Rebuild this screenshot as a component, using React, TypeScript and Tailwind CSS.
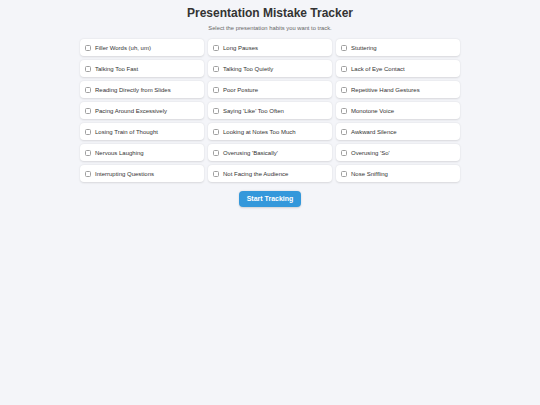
const habits = [
  "Filler Words (uh, um)",
  "Long Pauses",
  "Stuttering",
  "Talking Too Fast",
  "Talking Too Quietly",
  "Lack of Eye Contact",
  "Reading Directly from Slides",
  "Poor Posture",
  "Repetitive Hand Gestures",
  "Pacing Around Excessively",
  "Saying 'Like' Too Often",
  "Monotone Voice",
  "Losing Train of Thought",
  "Looking at Notes Too Much",
  "Awkward Silence",
  "Nervous Laughing",
  "Overusing 'Basically'",
  "Overusing 'So'",
  "Interrupting Questions",
  "Not Facing the Audience",
  "Nose Sniffling",
];

export default function App() {
  return (
    <div className="min-h-[405px] bg-[#f4f5f9] font-['Liberation_Sans',Arial,sans-serif] text-[#333]">
      <div className="mx-auto flex w-[380px] flex-col items-center pt-[6px]">
        <h1 className="text-[12px] font-bold leading-[15px] text-[#333]">
          Presentation Mistake Tracker
        </h1>
        <p className="mt-[4px] text-[5.8px] leading-[7px] text-[#666]">
          Select the presentation habits you want to track.
        </p>
        <div className="mt-[7px] grid w-full grid-cols-3 gap-x-[4px] gap-y-[4px]">
          {habits.map((h) => (
            <label
              key={h}
              className="flex h-[17px] items-center gap-[4px] rounded-[4px] bg-white px-[5px] shadow-[0_0.5px_2px_rgba(0,0,0,0.12)]"
            >
              <span className="size-[6px] rounded-[1.5px] border-[0.5px] border-[#a0a0a0] bg-white" />
              <span className="text-[6px] leading-[8px] text-[#333]">{h}</span>
            </label>
          ))}
        </div>
        <button className="mt-[9px] h-[16px] w-[62px] rounded-[4px] bg-[#3498db] text-[7px] font-bold text-white shadow-[0_0.5px_2px_rgba(0,0,0,0.15)]">
          Start Tracking
        </button>
      </div>
    </div>
  );
}
